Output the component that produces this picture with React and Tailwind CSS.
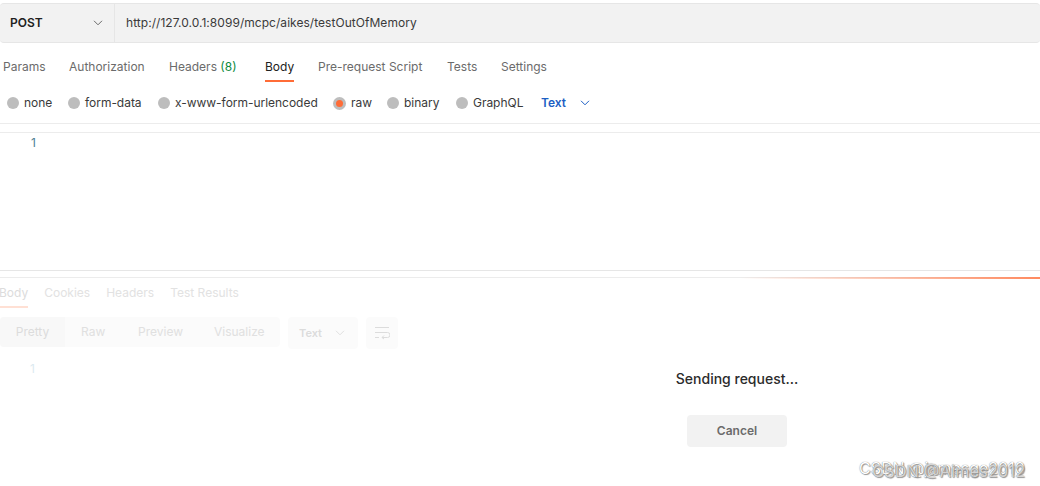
import React from "react";

const font = { fontFamily: "Inter, 'Noto Sans', sans-serif" };

function Chevron({ className }) {
  return (
    <svg className={className} width="10" height="6" viewBox="0 0 10 6" fill="none" stroke="currentColor" strokeWidth="1">
      <path d="M1 0.8 L5 4.8 L9 0.8" />
    </svg>
  );
}

function Radio({ label, active, className = "" }) {
  return (
    <div className={`flex items-center gap-[5px] ${className}`}>
      {active ? (
        <span className="flex h-[13px] w-[13px] items-center justify-center rounded-full bg-[#bdbdbd]">
          <span className="h-[7px] w-[7px] rounded-full bg-[#ff6c37]" />
        </span>
      ) : (
        <span className="h-[12px] w-[12px] rounded-full bg-[#bdbdbd]" />
      )}
      <span className="text-xs leading-4 tracking-[-0.03px] text-[#3a3a3a]">{label}</span>
    </div>
  );
}

function Tab({ children, active, className = "" }) {
  return (
    <div className={`relative flex h-[30px] items-center text-xs ${active ? "text-[#212121]" : "text-[#6b6b6b]"} ${className}`}>
      {children}
      {active && <span className="absolute bottom-0 left-0 right-0 h-[2px] bg-[#ff6c37]" />}
    </div>
  );
}

export default function App() {
  return (
    <div className="relative h-[486px] w-[1040px] overflow-hidden bg-white" style={font}>
      <div className="pt-[3px]">
        <div className="flex h-[40px] items-center rounded-sm border-y border-[#e6e6e6] bg-[#f2f2f2]">
          <div className="flex h-full w-[115px] shrink-0 items-center justify-between border-r border-[#e6e6e6] pl-[10px] pr-[11px]">
            <span className="text-xs font-semibold text-[#212121]">POST</span>
            <Chevron className="text-[#6b6b6b]" />
          </div>
          <span className="pl-[11px] text-xs tracking-[0.04px] text-[#3a3a3a]">http://127.0.0.1:8099/mcpc/aikes/testOutOfMemory</span>
        </div>
      </div>

      <div className="mt-[9px] flex h-[30px] pl-[3px]">
        <Tab className="w-[66px]">Params</Tab>
        <Tab className="w-[100px]">Authorization</Tab>
        <Tab className="w-[96px]">
          Headers&nbsp;<span className="text-[#0c8a3e]">(8)</span>
        </Tab>
        <Tab active className="w-[29px]">Body</Tab>
        <Tab className="ml-[24px] w-[129px]">Pre-request Script</Tab>
        <Tab className="w-[54px]">Tests</Tab>
        <Tab>Settings</Tab>
      </div>

      <div className="mt-[13px] flex h-[16px] items-center pl-[7px]">
        <Radio label="none" className="w-[61px]" />
        <Radio label="form-data" className="w-[90px]" />
        <Radio label="x-www-form-urlencoded" className="w-[175px]" />
        <Radio label="raw" active className="w-[54px]" />
        <Radio label="binary" className="w-[69px]" />
        <Radio label="GraphQL" className="w-[85px]" />
        <span className="text-xs font-semibold text-[#1d5fc4]">Text</span>
        <Chevron className="ml-[14px] text-[#1d5fc4]" />
      </div>

      <div className="mt-[12px] h-[10px] border-y border-[#ececec]" />

      <div className="h-[138px] border-b border-[#e6e6e6] pt-[2px]">
        <div className="w-[36px] text-right text-xs leading-4 text-[#4f7f92]">1</div>
      </div>

      <div className="relative h-[207px] pt-[6px]">
        <div className="h-px bg-[#ececec]" />
        <div className="absolute left-[740px] right-0 top-[6px] h-[2px] bg-gradient-to-r from-transparent to-[#ff8a5f]" />

        <div className="-ml-px flex h-[30px] gap-[16px] text-xs text-[#e2e2e2]">
          <div className="relative flex items-center text-[#dcdcdc]">
            Body
            <span className="absolute bottom-0 left-0 right-0 h-[2px] bg-[#ffe0d4]" />
          </div>
          <div className="flex items-center">Cookies</div>
          <div className="flex items-center">Headers</div>
          <div className="flex items-center">Test Results</div>
        </div>

        <div className="mt-[9px] flex items-start text-xs text-[#e0e0e0]">
          <div className="flex h-[30px] w-[280px] items-center rounded bg-[#fbfbfb]">
            <div className="flex h-full w-[65px] items-center justify-center rounded-l bg-[#f8f8f8] text-[#dcdcdc]">Pretty</div>
            <div className="w-[57px] pl-[16px]">Raw</div>
            <div className="w-[77px] pl-[16px]">Preview</div>
            <div className="pl-[15px]">Visualize</div>
          </div>
          <div className="ml-[8px] flex h-[32px] w-[70px] items-center justify-between rounded bg-[#fbfbfb] pl-[11px] pr-[13px]">
            <span className="text-[11px] font-semibold text-[#dcdcdc]">Text</span>
            <Chevron />
          </div>
          <div className="ml-[8px] flex h-[32px] w-[32px] items-center justify-center rounded bg-[#fbfbfb]">
            <svg width="16" height="14" viewBox="0 0 16 14" fill="none" stroke="#dcdcdc" strokeWidth="1">
              <path d="M1 1.5 H15 M1 6.5 H13.5 A2.5 2.5 0 0 1 13.5 11.5 H8 M10 9.5 L8 11.5 L10 13 M1 11.5 H5" />
            </svg>
          </div>
        </div>

        <div className="mt-[12px] w-[35px] text-right text-xs leading-4 text-[#dceaf0]">1</div>

        <div className="absolute left-[637px] top-[100px] flex w-[200px] flex-col items-center">
          <span className="text-sm font-medium leading-4 text-[#2b2b2b]">Sending request...</span>
          <button className="mt-[28px] h-[32px] w-[100px] rounded bg-[#f2f2f2] text-xs font-semibold text-[#6b6b6b]">Cancel</button>
        </div>
      </div>

      <span className="absolute left-[859px] top-[458px] text-[16px] leading-5 text-white [text-shadow:0_0_1px_#666,1px_1px_1px_#999]">CSDN @jamesge2010</span>
      <span className="absolute left-[872px] top-[461px] text-[16.5px] leading-5 text-white/70 [text-shadow:0_0_1px_#666,1px_1px_1px_#999]">CSDN @Aimes2012</span>
    </div>
  );
}
